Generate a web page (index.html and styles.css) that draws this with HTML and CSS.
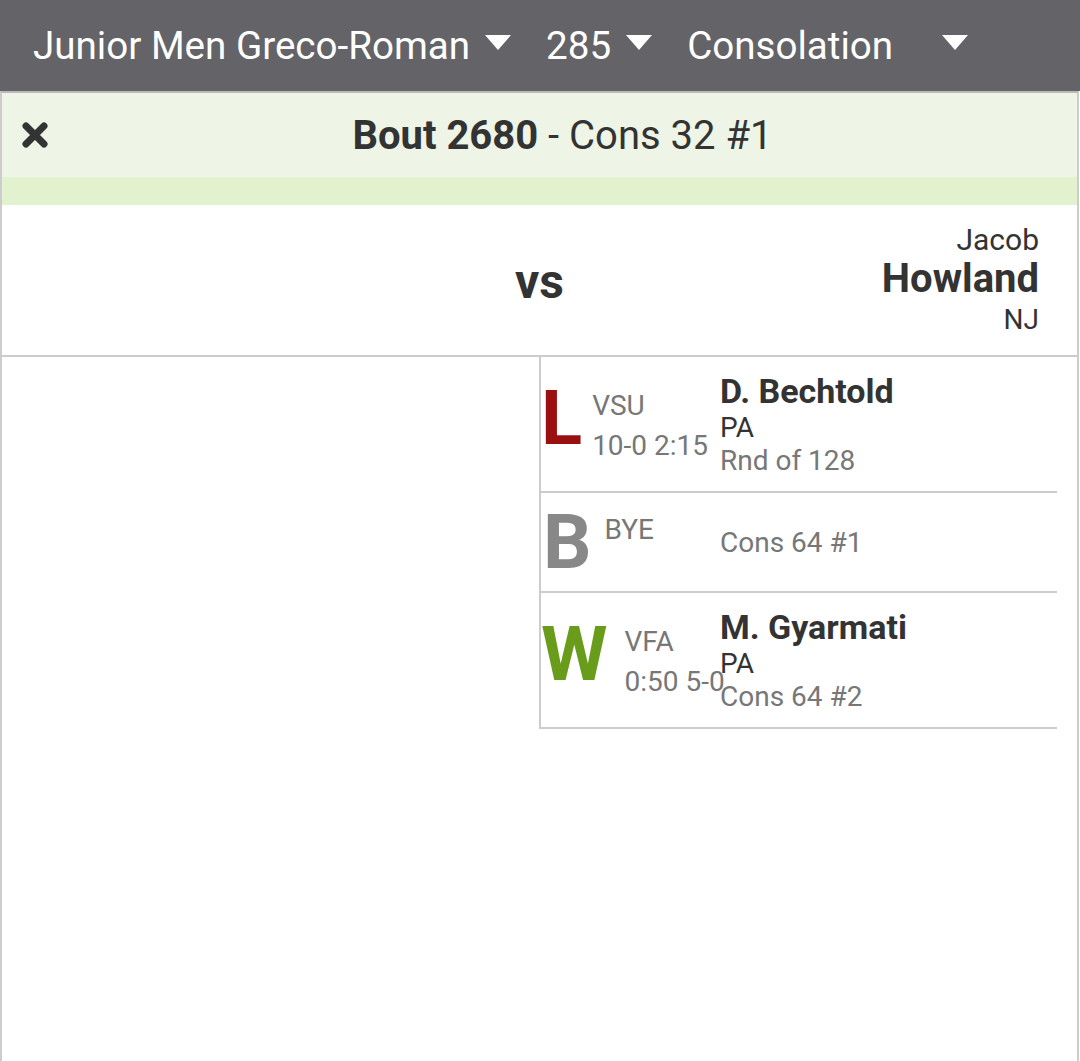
FILE: index.html
```html
<!DOCTYPE html>
<html lang="en">
<head>
<meta charset="utf-8">
<title>Bout 2680</title>
<link rel="stylesheet" href="styles.css">
</head>
<body>
<div class="topbar">
  <div class="sel"><span class="sel-label">Junior Men Greco-Roman</span><span class="caret"></span></div>
  <div class="sel"><span class="sel-label">285</span><span class="caret"></span></div>
  <div class="sel sel-wide"><span class="sel-label">Consolation</span><span class="caret"></span></div>
</div>
<div class="panel">
  <div class="bout-head">
    <div class="close">
      <svg width="26" height="26" viewBox="0 0 26 26"><path d="M4 4 L22 22 M22 4 L4 22" stroke="#333" stroke-width="7" stroke-linecap="round"/></svg>
    </div>
    <div class="bout-title"><b>Bout 2680</b> - Cons 32 #1</div>
  </div>
  <div class="bout-strip"></div>
  <div class="matchup">
    <div class="side"></div>
    <div class="vs">vs</div>
    <div class="side side-right">
      <div class="first">Jacob</div>
      <div class="last">Howland</div>
      <div class="team">NJ</div>
    </div>
  </div>
  <div class="history">
    <div class="history-spacer"></div>
    <div class="bouts">
      <div class="bout-row">
        <div class="res"><span class="letter loss">L</span><div class="res-text"><div>VSU</div><div>10-0 2:15</div></div></div>
        <div class="opp"><div class="opp-name">D. Bechtold</div><div class="opp-team">PA</div><div class="opp-round">Rnd of 128</div></div>
      </div>
      <div class="bout-row">
        <div class="res"><span class="letter bye">B</span><div class="res-text"><div>BYE</div></div></div>
        <div class="opp"><div class="opp-round">Cons 64 #1</div></div>
      </div>
      <div class="bout-row">
        <div class="res"><span class="letter win">W</span><div class="res-text"><div>VFA</div><div>0:50 5-0</div></div></div>
        <div class="opp"><div class="opp-name">M. Gyarmati</div><div class="opp-team">PA</div><div class="opp-round">Cons 64 #2</div></div>
      </div>
    </div>
  </div>
</div>
</body>
</html>
```

FILE: styles.css
```css
html, body {
  margin: 0;
  padding: 0;
  background: #fff;
  font-family: Roboto, "Noto Sans", "Liberation Sans", sans-serif;
  color: #333;
}

.topbar {
  height: 91px;
  background: #636368;
  color: #fff;
  display: flex;
  align-items: center;
  padding-left: 33px;
  gap: 35px;
  font-size: 38.6px;
}

.sel {
  display: flex;
  align-items: center;
  gap: 15px;
}

.sel-wide .sel-label {
  min-width: 240px;
}

.caret {
  width: 0;
  height: 0;
  border-left: 13px solid transparent;
  border-right: 13px solid transparent;
  border-top: 15px solid #fff;
  margin-top: -7px;
}

.panel {
  border: 2px solid #cccccc;
  border-top-color: #b9b9b9;
  border-bottom: 0;
  margin-right: 1px;
  min-height: 970px;
  box-sizing: border-box;
}

.bout-head {
  display: flex;
  align-items: center;
  height: 84px;
  background: #eef5e6;
}

.close {
  width: 46px;
  padding-left: 20px;
  box-sizing: border-box;
  display: flex;
  align-items: center;
}

.close svg {
  display: block;
}

.bout-title {
  flex: 1;
  text-align: center;
  font-size: 40px;
  color: #333;
}

.bout-title b {
  font-weight: 700;
}

.bout-strip {
  height: 28px;
  background: #e2f2cf;
}

.matchup {
  display: grid;
  grid-template-columns: 1fr auto 1fr;
  align-items: center;
  border-bottom: 2px solid #cccccc;
  padding: 18px 0 16px;
}

.vs {
  font-size: 48px;
  font-weight: 700;
  color: #333;
}

.side-right {
  text-align: right;
  padding-right: 38px;
}

.first {
  font-size: 30px;
  line-height: 34px;
}

.last {
  font-size: 40px;
  font-weight: 700;
  line-height: 44px;
}

.team {
  font-size: 28px;
  line-height: 38px;
}

.history {
  display: grid;
  grid-template-columns: 537px 518px;
}

.bouts {
  border-left: 2px solid #cccccc;
}

.bout-row {
  display: grid;
  grid-template-columns: 179px 1fr;
  align-items: center;
  border-bottom: 2px solid #cccccc;
  padding: 14px 0;
}

.res {
  display: flex;
  align-items: flex-start;
  white-space: nowrap;
}

.letter {
  font-size: 76px;
  font-weight: 700;
  line-height: 70px;
}

.loss { color: #9a1010; }
.bye { color: #888888; margin-left: 2px; margin-right: 3px; }
.win { color: #6a9c1c; letter-spacing: 7px; }

.res-text {
  margin-left: 10px;
  padding-top: 3px;
  font-size: 28px;
  line-height: 40px;
  color: #777;
}

.opp {
  white-space: nowrap;
}

.opp-name {
  font-size: 34px;
  font-weight: 700;
  line-height: 40px;
  color: #333;
}

.opp-team {
  font-size: 28px;
  line-height: 33px;
  color: #333;
}

.opp-round {
  font-size: 28px;
  line-height: 33px;
  color: #777;
}
```
